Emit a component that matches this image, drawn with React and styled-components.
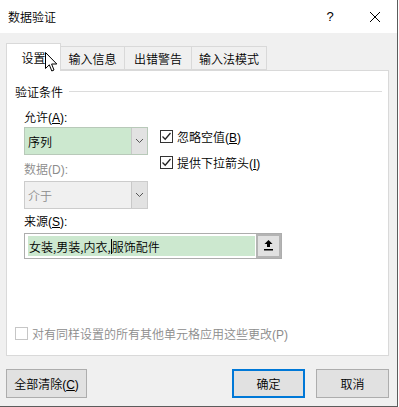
import styled, { createGlobalStyle } from 'styled-components'

const Global = createGlobalStyle`
    html, body {
        margin: 0;
        padding: 0;
        background: #ffffff;
    }
    body {
        font-family: "Noto Sans CJK SC", "Noto Sans", sans-serif;
        font-weight: 350;
        font-size: 12px;
        color: #000;
    }
`;

const Dialog = styled.div`
    position: relative;
    width: 397px;
    height: 406px;
    border-right: 1px solid #5c5c5c;
    border-bottom: 1px solid #5c5c5c;
    background: #f0f0f0;
    display: flex;
    flex-direction: column;
    overflow: hidden;
`;

const TitleBar = styled.div`
    height: 33px;
    background: #ffffff;
    display: flex;
    align-items: center;
    padding-left: 8px;
    flex-shrink: 0;
`;

const Title = styled.div`
    flex: 1;
    font-size: 12px;
    line-height: 12px;
`;

const TitleButton = styled.div`
    width: ${props => props.w}px;
    height: 33px;
    display: flex;
    align-items: center;
    justify-content: center;
    font-family: "Liberation Sans", sans-serif;
    font-size: 13px;
`;

const Body = styled.div`
    flex: 1;
    padding: 9px 8px 0 6px;
    display: flex;
    flex-direction: column;
`;

const TabRow = styled.div`
    display: flex;
    align-items: flex-end;
    height: 28px;
    position: relative;
    z-index: 1;
`;

const Tab = styled.div`
    width: ${props => props.w}px;
    height: ${props => props.active ? 28 : 24}px;
    margin-left: ${props => props.active ? 0 : -1}px;
    box-sizing: border-box;
    background: ${props => props.active ? '#ffffff' : '#f0f0f0'};
    border: 1px solid #d9d9d9;
    border-bottom: ${props => props.active ? 'none' : '1px solid #d9d9d9'};
    display: flex;
    align-items: center;
    justify-content: center;
    font-size: 12px;
    position: relative;
    top: ${props => props.active ? 1 : 0}px;
`;

const Panel = styled.div`
    height: 286px;
    box-sizing: border-box;
    background: #ffffff;
    border: 1px solid #d9d9d9;
    padding: 13px 6px 0 8px;
    display: flex;
    flex-direction: column;
`;

const GroupHeader = styled.div`
    display: flex;
    align-items: center;
    gap: 6px;
    font-size: 12px;
    height: 14px;
`;

const GroupLine = styled.div`
    flex: 1;
    height: 1px;
    background: #dcdcdc;
`;

const Fields = styled.div`
    padding-left: 9px;
    display: flex;
    flex-direction: column;
`;

const TopRow = styled.div`
    display: flex;
    align-items: flex-start;
    gap: 12px;
`;

const Column = styled.div`
    display: flex;
    flex-direction: column;
`;

const Label = styled.div`
    font-size: 12px;
    height: 14px;
    line-height: 14px;
    margin-top: ${props => props.mt}px;
    color: ${props => props.disabled ? '#8c8c8c' : '#000'};
`;

const Key = styled.span`
    text-decoration: underline;
    font-family: "Liberation Sans", sans-serif;
    font-weight: 400;
`;

const Paren = styled.span`
    font-family: "Liberation Sans", sans-serif;
    font-weight: 400;
`;

const Combo = styled.div`
    width: 124px;
    height: 28px;
    margin-top: ${props => props.mt}px;
    box-sizing: border-box;
    border: 1px solid ${props => props.disabled ? '#cccccc' : '#b8c9b9'};
    background: ${props => props.disabled ? '#f0f0f0' : '#cce8cf'};
    display: flex;
    color: ${props => props.disabled ? '#8c8c8c' : '#000'};
`;

const ComboText = styled.div`
    flex: 1;
    display: flex;
    align-items: center;
    padding-left: 3px;
    font-size: 12px;
`;

const DropButton = styled.div`
    width: 16px;
    box-sizing: border-box;
    background: #e2e2e2;
    border-left: 1px solid #c8c8c8;
    display: flex;
    align-items: center;
    justify-content: center;
`;

const Checks = styled.div`
    display: flex;
    flex-direction: column;
    gap: 11px;
    padding-top: 31px;
`;

const CheckRow = styled.div`
    display: flex;
    align-items: center;
    gap: 4px;
    font-size: 12px;
    height: 15px;
    color: ${props => props.disabled ? '#8c8c8c' : '#000'};
`;

const Box = styled.div`
    width: 13px;
    height: 13px;
    box-sizing: border-box;
    border: 1px solid ${props => props.disabled ? '#c6c6c6' : '#333333'};
    background: #fff;
    display: flex;
    align-items: center;
    justify-content: center;
`;

const Source = styled.div`
    width: 258px;
    height: 26px;
    margin-top: 5px;
    box-sizing: border-box;
    border: 1px solid #adadad;
    background: #ffffff;
    display: flex;
    padding: 2px 0 2px 3px;
`;

const Selected = styled.div`
    flex: 1;
    background: #cce8cf;
    display: flex;
    align-items: center;
    font-size: 12px;
    padding-left: 1px;
`;

const Caret = styled.span`
    display: inline-block;
    width: 1px;
    height: 15px;
    background: #000;
`;

const RefButton = styled.div`
    width: 25px;
    margin: -2px 0 -2px 1px;
    box-sizing: border-box;
    background: #e1e1e1;
    border: 2px solid #b4b4b4;
    display: flex;
    align-items: flex-start;
    justify-content: center;
    padding-top: 3px;
`;

const Spacer = styled.div`
    flex: 1;
`;

const Bottom = styled.div`
    padding: 0 0 14px 0;
`;

const Footer = styled.div`
    display: flex;
    align-items: center;
    margin-top: 13px;
`;

const Button = styled.div`
    width: ${props => props.w}px;
    height: 29px;
    box-sizing: border-box;
    background: #e1e1e1;
    border: ${props => props.primary ? '2px solid #0078d7' : '1px solid #adadad'};
    display: flex;
    align-items: center;
    justify-content: center;
    font-size: 12px;
    margin-left: ${props => props.ml || 0}px;
`;

const Pointer = styled.svg`
    position: absolute;
    left: 45px;
    top: 52px;
    z-index: 5;
`;

const Chevron = () => (
    <svg width="9" height="6" viewBox="0 0 9 6">
        <path d="M1 1 L4.5 4.5 L8 1" fill="none" stroke="#555" strokeWidth="1" />
    </svg>
)

const Tick = () => (
    <svg width="11" height="11" viewBox="0 0 11 11">
        <path d="M1.5 5.5 L4.2 8.2 L9.5 2" fill="none" stroke="#222" strokeWidth="1.3" />
    </svg>
)

const App = () => {
    return (
        <>
            <Global />
            <Dialog>
                <TitleBar>
                    <Title>数据验证</Title>
                    <TitleButton w={46}>?</TitleButton>
                    <TitleButton w={44}>
                        <svg width="12" height="12" viewBox="0 0 12 12">
                            <path d="M1 1 L11 11 M11 1 L1 11" stroke="#000" strokeWidth="1" />
                        </svg>
                    </TitleButton>
                </TitleBar>
                <Body>
                    <TabRow>
                        <Tab active w={55}>设置</Tab>
                        <Tab w={65}>输入信息</Tab>
                        <Tab w={68}>出错警告</Tab>
                        <Tab w={76}>输入法模式</Tab>
                    </TabRow>
                    <Panel>
                        <GroupHeader>
                            验证条件
                            <GroupLine />
                        </GroupHeader>
                        <Fields>
                            <TopRow>
                                <Column>
                                    <Label mt={12}>允许<Paren>(</Paren><Key>A</Key><Paren>):</Paren></Label>
                                    <Combo mt={3}>
                                        <ComboText>序列</ComboText>
                                        <DropButton><Chevron /></DropButton>
                                    </Combo>
                                    <Label mt={7} disabled>数据<Paren>(D):</Paren></Label>
                                    <Combo mt={5} disabled>
                                        <ComboText>介于</ComboText>
                                        <DropButton><Chevron /></DropButton>
                                    </Combo>
                                </Column>
                                <Checks>
                                    <CheckRow><Box><Tick /></Box><span>忽略空值<Paren>(</Paren><Key>B</Key><Paren>)</Paren></span></CheckRow>
                                    <CheckRow><Box><Tick /></Box><span>提供下拉箭头<Paren>(</Paren><Key>I</Key><Paren>)</Paren></span></CheckRow>
                                </Checks>
                            </TopRow>
                            <Label mt={5}>来源<Paren>(</Paren><Key>S</Key><Paren>):</Paren></Label>
                            <Source>
                                <Selected>女装,男装,内衣,<Caret />服饰配件</Selected>
                                <RefButton>
                                    <svg width="11" height="12" viewBox="0 0 11 12">
                                        <path d="M5.5 1 L1.5 5 L4 5 L4 8 L7 8 L7 5 L9.5 5 Z" fill="#000" />
                                        <rect x="1" y="10" width="9" height="1.5" fill="#000" />
                                    </svg>
                                </RefButton>
                            </Source>
                        </Fields>
                        <Spacer />
                        <Bottom>
                            <CheckRow disabled><Box disabled /><span>对有同样设置的所有其他单元格应用这些更改<Paren>(P)</Paren></span></CheckRow>
                        </Bottom>
                    </Panel>
                    <Footer>
                        <Button w={81}><span>全部清除<Paren>(</Paren><Key>C</Key><Paren>)</Paren></span></Button>
                        <Spacer />
                        <Button w={73} primary>确定</Button>
                        <Button w={73} ml={11}>取消</Button>
                    </Footer>
                </Body>
                <Pointer width="13" height="21" viewBox="0 0 13 21">
                    <path d="M0.5 0.5 L0.5 16.5 L4.3 12.8 L6.8 19 L9 18 L6.6 12 L11.8 12 Z" fill="#fff" stroke="#000" strokeWidth="1" strokeLinejoin="round" />
                </Pointer>
            </Dialog>
        </>
    )
}

export default App
